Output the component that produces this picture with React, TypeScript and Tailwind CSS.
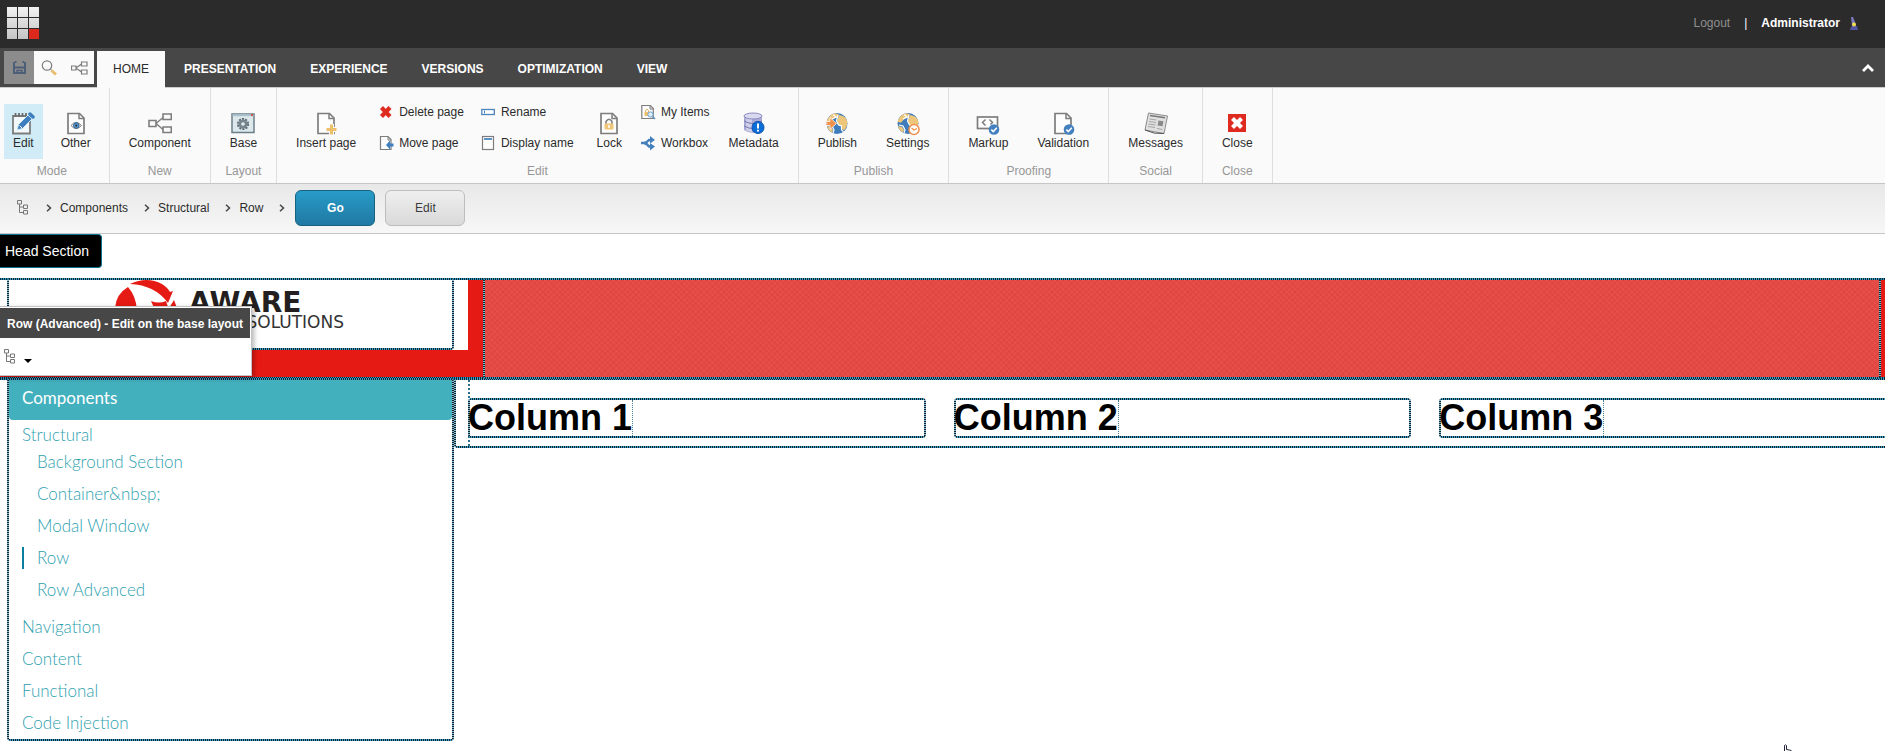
import type { ReactNode } from "react";

const LINE_TOP =
  "[background:repeating-linear-gradient(90deg,#082a3a_0_1px,#3194bd_1px_2px)]";
const LINE_BOX =
  "p-[2px] rounded-[4px] [background:repeating-linear-gradient(90deg,#14222a_0_1px,#3aa0cc_1px_2px)_top/100%_2px_no-repeat,repeating-linear-gradient(90deg,#14222a_0_1px,#3aa0cc_1px_2px)_bottom/100%_2px_no-repeat,repeating-linear-gradient(0deg,#14222a_0_1px,#7fb9d2_1px_2px)_left/2px_100%_no-repeat,repeating-linear-gradient(0deg,#14222a_0_1px,#7fb9d2_1px_2px)_right/2px_100%_no-repeat]";

const G = "#7d7d7d";

function Svg({ size = 24, children }: { size?: number; children: ReactNode }) {
  return (
    <svg
      width={size}
      height={size}
      viewBox={`0 0 ${size} ${size}`}
      fill="none"
      aria-hidden="true"
      className={"block shrink-0 " + (size === 24 ? "-mx-1" : "")}
    >
      {children}
    </svg>
  );
}

function Page() {
  return (
    <>
      <path d="M4 1.5h11.5l4.5 4.5v15.5H4z" fill="#fdfdfd" stroke={G} strokeWidth="1.7" />
      <path d="M15 2v4.5h5" stroke={G} strokeWidth="1.5" />
    </>
  );
}

function Tick() {
  return (
    <>
      <circle cx="18" cy="17.5" r="5.3" fill="#4380bf" />
      <path d="M15.3 17.6l2 2 3.5-3.8" stroke="#fff" strokeWidth="1.5" />
    </>
  );
}

function Globe() {
  return (
    <>
      <circle cx="12" cy="11.5" r="11" fill="#fbfbfb" />
      <circle cx="12" cy="11.5" r="10.5" fill="#3f7cbc" />
      <path d="M10 1.2l4 1-2 3-4 2-3 3.5-3.5-1Q4 2.5 10 1.2z" fill="#eec679" />
      <path d="M14 3q7 .5 8.4 7-.5 6-3.4 8.5l-2.5-2 .5-3-3.5-.5-1.5-4z" fill="#eec679" />
      <path d="M8 2.5l3 2.5-4 2M13 3l-1.5 6 2 4 3 .8 0 4 2 2M3 13l4 1 2 4-1 3" stroke="#fff" strokeWidth="1.2" />
      <path d="M2 14l4 1 2 3-1 2.5Q3 18 2 14z" fill="#eec679" />
    </>
  );
}

const icons: Record<string, ReactNode> = {
  edit: (
    <Svg>
      <path d="M2 4h17v17.5H2z" fill="#f2f8fb" stroke={G} strokeWidth="1.8" />
      <path d="M4.5 1v4M8 1v4M11.5 1v4M15 1v4" stroke="#6d6d6d" strokeWidth="1.8" />
      <path d="M6 18l1.5-5.5L17 3l4 4-9.5 9.5z" fill="#3f7fc0" stroke="#d1ecf7" />
      <path d="M19 2l3 3" stroke="#3f7fc0" strokeWidth="3.5" strokeLinecap="round" />
      <path d="M8.5 13.5l2.5 2.5" stroke="#fff" />
    </Svg>
  ),
  other: (
    <Svg>
      <Page />
      <path d="M7 13.5q5-6 10.500 0-5.500 6-10.500 0z" fill="#fff" stroke={G} />
      <circle cx="12.3" cy="13.5" r="2.8" fill="#5b9bd5" stroke="#32608f" />
      <circle cx="12.3" cy="13.5" r="1" fill="#222" />
    </Svg>
  ),
  component: (
    <Svg>
      <path d="M1 8.5h7v6H1zM15 2h8.300v5.500H15zM15 15h8.300v5.500H15z" stroke={G} strokeWidth="1.6" />
      <path d="M8 11.5l7-6M8 11.5l7 6" stroke={G} strokeWidth="1.4" />
    </Svg>
  ),
  base: (
    <Svg>
      <rect x="1" y="2" width="22" height="18.5" fill="#dde8ec" stroke="#6b7f88" strokeWidth="1.5" />
      <path d="M1.5 3.2h21" stroke="#a9c3cf" strokeWidth="2" />
      <path d="M20 3h2" stroke="#e02f22" strokeWidth="1.5" />
      <circle cx="12" cy="12" r="5" stroke="#5d6c74" strokeWidth="2.2" strokeDasharray="2 1.14" />
      <circle cx="12" cy="12" r="4.5" fill="#77868e" />
      <circle cx="12" cy="12" r="1.8" fill="#e6eef1" />
    </Svg>
  ),
  insert: (
    <Svg>
      <Page />
      <path d="M17.5 12v11M12 17.5h11" stroke="#fafafa" strokeWidth="5" />
      <path d="M17.5 12.5v10M12.5 17.5h10" stroke="#edc06c" strokeWidth="3" />
    </Svg>
  ),
  lock: (
    <Svg>
      <Page />
      <path d="M9 12v-2.500q3-4.500 6 0V12" stroke={G} strokeWidth="1.5" />
      <rect x="7.5" y="11.5" width="9" height="6" rx="1" fill="#efc577" />
      <path d="M12 13v3" stroke="#fff" strokeWidth="1.5" />
    </Svg>
  ),
  metadata: (
    <Svg>
      <path d="M2 4v14q9 6 18 0V4z" fill="#a9a9d6" />
      <path d="M4 5v13q3 2 6 2V6z" fill="#cfcfea" />
      <ellipse cx="11" cy="4" rx="9" ry="3" fill="#d8d8ee" stroke="#8a8abf" />
      <path d="M2 9q9 5 18 0M2 14q9 5 18 0" stroke="#7575ad" />
      <circle cx="16" cy="15.5" r="6" fill="#0c6fd8" stroke="#0a4fae" />
      <path d="M16 11.5v5M16 17.8v1.800" stroke="#fff" strokeWidth="2" />
    </Svg>
  ),
  publish: (
    <Svg>
      <Globe />
      <path d="M0 9.5h5V5.500l6.500 6-6.500 6v-4H0l2-2z" fill="#f0904a" stroke="#fafafa" strokeWidth=".8" />
    </Svg>
  ),
  settings: (
    <Svg>
      <Globe />
      <circle cx="18" cy="17.5" r="5" fill="#fff" stroke="#f0904a" strokeWidth="1.5" />
      <path d="M15.5 16l2.500 2 3-1.500" stroke="#f0904a" strokeWidth="1.2" />
    </Svg>
  ),
  markup: (
    <Svg>
      <rect x="1.5" y="5" width="20" height="11.5" fill="#fdfdfd" stroke={G} strokeWidth="1.7" />
      <path d="M9.5 7.5L6.500 10.500l3 3M13.500 7.500l3 3-2 2" stroke={G} strokeWidth="1.5" />
      <Tick />
    </Svg>
  ),
  validation: (
    <Svg>
      <Page />
      <Tick />
    </Svg>
  ),
  messages: (
    <Svg>
      <path d="M4.5 1l19 3-3.500 17.500-19-3.500z" fill="#e0e0e0" stroke="#8b8b8b" />
      <path d="M6 3.5l15 2.300" stroke="#777" strokeWidth="1.6" />
      <path d="M5.5 7l7 1M5 9.500l7 1M4.500 12l7 1M4 14.500l7 1M13 16.500l5.500 1" stroke="#a5a5a5" />
      <path d="M14.5 8.500l5 .8-1 5-5-.8z" fill="#8a8a8a" />
      <path d="M1 18q9 4.500 19 3.500" stroke="#555" />
    </Svg>
  ),
  close: (
    <Svg>
      <rect x="3" y="2" width="18" height="18" fill="#df2a20" />
      <path d="M7.5 6.500l9 9M16.500 6.500l-9 9" stroke="#fff" strokeWidth="4.2" />
    </Svg>
  ),
  delete: (
    <Svg size={16}>
      <path d="M2.5 3.500l8.500 9M11 3.500l-8.500 9" stroke="#df2a20" strokeWidth="4.2" />
    </Svg>
  ),
  move: (
    <Svg size={16}>
      <path d="M1.5 1.500h7.500l3 3v10H1.500z" fill="#fdfdfd" stroke={G} strokeWidth="1.2" />
      <path d="M9 1.500v3.500h3" stroke={G} />
      <path d="M7 10l4-4.500v3h3.500v3H11v3z" fill="#3f7fc0" />
    </Svg>
  ),
  rename: (
    <Svg size={16}>
      <rect x=".8" y="5.5" width="12.5" height="5" fill="#fff" stroke="#4c86bd" strokeWidth="1.3" />
      <path d="M3.5 6.500v3" stroke="#4c86bd" />
    </Svg>
  ),
  display: (
    <Svg size={16}>
      <rect x="1.5" y="1.5" width="11" height="13" fill="#fdfdfd" stroke={G} strokeWidth="1.2" />
      <path d="M3 4h8" stroke="#4c86bd" strokeWidth="1.8" />
    </Svg>
  ),
  items: (
    <Svg size={16}>
      <path d="M.8 1.500h8.500l3 3v10H.8z" fill="#fdfdfd" stroke={G} strokeWidth="1.2" />
      <path d="M9 1.500v3.500h3" stroke={G} />
      <path d="M4.5 8V6.500q1.500-2.500 3 0V8" stroke="#e3ab55" />
      <rect x="3.5" y="8" width="4" height="4" fill="#edc06c" />
      <circle cx="9.5" cy="10.5" r="2.6" fill="#dcedf8" stroke="#6ea5d0" />
      <path d="M11.5 12.500l2.500 2.500" stroke="#5c92c4" strokeWidth="1.5" />
    </Svg>
  ),
  workbox: (
    <Svg size={16}>
      <path d="M0 8h4M3 8q3-.5 5-3h2M3 8q3 .5 5 3.500h2" stroke="#4480bd" strokeWidth="2.4" />
      <path d="M9 1l5 4-5 3.500zM9 8l5 3.500-5 4z" fill="#4480bd" />
    </Svg>
  ),
};

function Big({ icon, label, look = "px-[10px]" }: { icon: string; label: string; look?: string }) {
  return (
    <button
      type="button"
      className={"flex h-[55px] flex-col items-center pt-2 leading-[14px] whitespace-nowrap " + look}
    >
      {icons[icon]}
      {label}
    </button>
  );
}

function Small({ items, tight }: { items: [string, string][]; tight?: boolean }) {
  return (
    <div className={"flex flex-col items-start gap-[15px] " + (tight ? "-mx-1" : "")}>
      {items.map(([icon, label]) => (
        <button key={label} type="button" className="flex h-4 items-center gap-1 px-1 leading-4 whitespace-nowrap">
          {icons[icon]}
          {label}
        </button>
      ))}
    </div>
  );
}

function Group({ label, first, children }: { label: string; first?: boolean; children: ReactNode }) {
  return (
    <section
      aria-label={label}
      className={"flex flex-col border-r border-[#dedede] pt-4 pr-[9px] pb-1 " + (first ? "pl-1" : "pl-[9px]")}
    >
      <div className="flex gap-[9px]">{children}</div>
      <div className="mt-1 text-center leading-4 text-[#979797]">{label}</div>
    </section>
  );
}

function Tree() {
  return (
    <svg width="12" height="15" viewBox="0 0 12 15" fill="none" stroke="#777" aria-hidden="true" className="block shrink-0">
      <path d="M.5 .5h4v3.500h-4zM6.500 5h4v3.500h-4zM6.500 10.500h4V14h-4zM2.500 4v8.500h4M2.500 7h4" />
    </svg>
  );
}

function Chevron() {
  return (
    <svg width="6" height="8" viewBox="0 0 6 8" fill="none" stroke="#444" strokeWidth="1.5" aria-hidden="true" className="shrink-0">
      <path d="M1 .8L4.500 4 1 7.200" />
    </svg>
  );
}

const tabs = ["PRESENTATION", "EXPERIENCE", "VERSIONS", "OPTIMIZATION", "VIEW"];
const crumbs = ["Components", "Structural", "Row"];
const structural = ["Background Section", "Container&nbsp;", "Modal Window", "Row", "Row Advanced"];
const sections = ["Navigation", "Content", "Functional", "Code Injection"];
const columns = ["Column 1", "Column 2", "Column 3"];

export default function App() {
  return (
    <div className="relative min-h-screen overflow-hidden bg-white font-['Liberation_Sans',Arial,sans-serif] text-xs text-[#2b2b2b]">
      <header className="flex h-12 items-center justify-between bg-[#2b2b2b] pr-[27px] pl-[7px]">
        <svg width="32" height="32" viewBox="0 0 32 32" aria-label="Home" className="-mt-0.5">
          <defs>
            <linearGradient id="tile" x1="0" y1="0" x2="0" y2="32" gradientUnits="userSpaceOnUse">
              <stop offset="0" stopColor="#f2f2f2" />
              <stop offset="1" stopColor="#c4c4c4" />
            </linearGradient>
          </defs>
          {[0, 11, 22].map((y) =>
            [0, 11, 22].map((x) => (
              <rect key={`${x}-${y}`} x={x} y={y} width="10" height="10" fill={x + y === 44 ? "#dc291e" : "url(#tile)"} />
            )),
          )}
        </svg>
        <div className="flex items-center pb-0.5 text-white">
          <a href="#logout" className="text-[#8f8f8f]">Logout</a>
          <span className="px-[14px]">|</span>
          <span className="font-bold">Administrator</span>
          <svg width="8" height="14" viewBox="0 0 8 14" aria-hidden="true" className="mt-0.5 ml-[10px]">
            <path d="M1 0h2l2 5 1 4H2z" fill="#7a7ac0" />
            <path d="M0 13q1-5 4-5 3.500 0 4 5z" fill="#5353a4" />
            <circle cx="4" cy="7.5" r="2" fill="#f1dd4b" />
          </svg>
        </div>
      </header>

      <nav className="flex h-10 items-stretch border-b border-[#ccc] bg-[#474747] font-bold text-white">
        <div className="mt-[3px] ml-1 flex h-[33px] bg-[#fafafa]">
          <button type="button" aria-label="Save" className="flex w-[30px] items-center justify-center bg-[#8c8c8c]">
            <svg width="13" height="13" viewBox="0 0 13 13" fill="none" aria-hidden="true">
              <path d="M1 1v11h11V1" stroke="#4c5f77" strokeWidth="2" />
              <path d="M2 6.500h9" stroke="#4c5f77" strokeWidth="2" />
              <path d="M4 12V9.500h5V12" stroke="#4c5f77" strokeWidth="1.4" />
              <path d="M2 1h1.500M9.500 1H11" stroke="#4c5f77" strokeWidth="2" />
            </svg>
          </button>
          <button type="button" aria-label="Search" className="flex w-[30px] items-center justify-center">
            <svg width="16" height="16" viewBox="0 0 16 16" fill="none" aria-hidden="true">
              <circle cx="6" cy="5.5" r="4.7" stroke={G} strokeWidth="1.2" />
              <path d="M9.5 9l1.500 1.500" stroke={G} />
              <path d="M10.5 10.500l4.500 4" stroke="#e8bd6b" strokeWidth="3" />
            </svg>
          </button>
          <button type="button" aria-label="Navigate" className="flex w-[30px] items-center justify-center">
            <svg width="17" height="14" viewBox="0 0 17 14" fill="none" stroke={G} aria-hidden="true">
              <path d="M.5 5h4.500v4H.5zM10.500 1h5.500v4h-5.500zM10.500 9h5.500v4h-5.500zM5 7l5.500-4M5 7l5.500 4" strokeWidth="1.2" />
            </svg>
          </button>
        </div>
        <button type="button" className="mt-[3px] mr-0.5 -mb-px ml-[3px] bg-[#fafafa] px-4 pb-0.5 font-normal text-[#2b2b2b]">
          HOME
        </button>
        {tabs.map((t) => (
          <button key={t} type="button" className="mt-[3px] px-[17px]">
            {t}
          </button>
        ))}
        <button type="button" aria-label="Collapse" className="mr-[11px] ml-auto">
          <svg width="12" height="8" viewBox="0 0 12 8" fill="none" stroke="#fff" strokeWidth="2.8" aria-hidden="true">
            <path d="M1 7l5-5 5 5" />
          </svg>
        </button>
      </nav>

      <div className="flex border-b border-[#c6c6c6] bg-[#fafafa]">
        <Group label="Mode" first>
          <Big icon="edit" label="Edit" look="bg-[#d1ecf7] px-[9px]" />
          <Big icon="other" label="Other" look="px-[9px]" />
        </Group>
        <Group label="New">
          <Big icon="component" label="Component" />
        </Group>
        <Group label="Layout">
          <Big icon="base" label="Base" />
        </Group>
        <Group label="Edit">
          <Big icon="insert" label="Insert page" />
          <Small items={[["delete", "Delete page"], ["move", "Move page"]]} />
          <Small items={[["rename", "Rename"], ["display", "Display name"]]} />
          <Big icon="lock" label="Lock" />
          <Small tight items={[["items", "My Items"], ["workbox", "Workbox"]]} />
          <Big icon="metadata" label="Metadata" />
        </Group>
        <Group label="Publish">
          <Big icon="publish" label="Publish" />
          <Big icon="settings" label="Settings" />
        </Group>
        <Group label="Proofing">
          <Big icon="markup" label="Markup" />
          <Big icon="validation" label="Validation" />
        </Group>
        <Group label="Social">
          <Big icon="messages" label="Messages" />
        </Group>
        <Group label="Close">
          <Big icon="close" label="Close" />
        </Group>
      </div>

      <div className="flex h-[50px] items-center border-b border-[#c6c6c6] bg-linear-to-b from-[#e8e8e8] to-[#f7f7f7] pb-0.5 pl-[17px]">
        <Tree />
        <div className="ml-[17px] flex items-center">
          {crumbs.map((c) => (
            <span key={c} className="mr-4 flex items-center gap-2">
              <Chevron />
              <a href={"#" + c}>{c}</a>
            </span>
          ))}
          <Chevron />
        </div>
        <button
          type="button"
          className="ml-[10px] h-9 w-20 rounded-md border border-[#17627f] bg-linear-to-b from-[#289bc8] to-[#2079a3] font-bold text-white"
        >
          Go
        </button>
        <button
          type="button"
          className="ml-[10px] h-9 w-20 rounded-md border border-[#bdbdbd] bg-linear-to-b from-[#efefef] to-[#d9d9d9] text-[#3c3c3c]"
        >
          Edit
        </button>
      </div>

      <div className="mb-[10px] flex">
        <div className="h-[34px] rounded-r border border-l-0 border-[#08728f] bg-black pr-3 pl-[5px] text-sm leading-8 text-white">
          Head Section
        </div>
      </div>

      <div className={"h-0.5 " + LINE_TOP} />
      <div className="relative flex bg-[#e61a14]">
        <div className="mb-[27px] h-[70px] w-[468px] shrink-0 bg-white pl-[7px]">
          <div className={"-mt-0.5 h-[72px] w-[447px] " + LINE_BOX}>
            <svg width="440" height="68" viewBox="0 0 440 68" role="img" aria-label="Aware Solutions">
              <path d="M106 28Q107 14 119 7Q127 16 128 30L106 30Z" fill="#e61a14" />
              <path d="M121 4Q138-4 153 4Q159 8 161 12L164 11L159 23Q146 5 121 4Z" fill="#e61a14" />
              <path d="M142 21Q150 24 157 21L160 30H146zM165 20l3 8h-8z" fill="#e61a14" />
              <text x="180" y="32" fill="#231f20" fontFamily="'DejaVu Sans', sans-serif" fontWeight="bold" fontSize="28">
                AWARE
              </text>
              <text x="335" y="48" textAnchor="end" fill="#333" fontFamily="'DejaVu Sans', sans-serif" fontSize="17">
                SOLUTIONS
              </text>
            </svg>
          </div>
        </div>
        <div className="-mt-0.5 mr-[4px] -mb-0.5 ml-[15px] flex flex-1">
          <div className={"flex flex-1 " + LINE_BOX}>
            <div className="flex-1 bg-[#ea4e49] bg-[repeating-linear-gradient(45deg,#c83c3638_0_2px,transparent_2px_4px),repeating-linear-gradient(-45deg,#c83c3638_0_2px,transparent_2px_4px)]" />
          </div>
        </div>
        <div className="absolute top-[26px] left-0 z-10 w-[252px] border border-l-0 border-[#c4c4c4] bg-white pt-px pr-px shadow-[2px_2px_5px_rgba(0,0,0,0.3)]">
          <div className="h-[30px] bg-[#474747] pl-[7px] leading-8 font-bold whitespace-nowrap text-white">
            Row (Advanced) - Edit on the base layout
          </div>
          <button type="button" aria-label="Layout options" className="flex h-[37px] items-center gap-2 pl-1">
            <Tree />
            <svg width="8" height="4" viewBox="0 0 8 4" aria-hidden="true" className="mt-2">
              <path d="M0 0h8L4 4z" fill="#000" />
            </svg>
          </button>
        </div>
      </div>
      <div className={"h-[3px] " + LINE_TOP} />

      <div className="-mt-0.5 flex items-start pl-[7px]">
        <aside className={"w-[447px] shrink-0 font-['Lato','Open_Sans',sans-serif] text-[17px] leading-8 font-light text-[#2f9fb0] " + LINE_BOX}>
          <h2 className="h-10 rounded-b-sm bg-[#43b0be] pl-[13px] leading-9 font-normal text-white">Components</h2>
          <ul className="pl-[13px]">
            <li>
              <a href="#structural" className="block h-[26px] leading-[30px]">Structural</a>
              <ul className="mb-[5px]">
                {structural.map((s) => (
                  <li key={s} className="flex items-center">
                    <span className={"h-[22px] w-0.5 " + (s === "Row" ? "bg-[#0c7ea0]" : "")} />
                    <a href={"#" + s} className="pl-[13px]">{s}</a>
                  </li>
                ))}
              </ul>
            </li>
            {sections.map((s) => (
              <li key={s}>
                <a href={"#" + s}>{s}</a>
              </li>
            ))}
          </ul>
        </aside>
        <main className={"-mr-[14px] h-[70px] flex-1 " + LINE_BOX}>
          <div className="ml-3 h-full border-l-2 border-dotted border-[#2c6f8d] pt-[18px]">
            <div className="-ml-0.5 grid grid-cols-3 gap-7">
              {columns.map((c) => (
                <div key={c} className={"flex h-10 " + LINE_BOX}>
                  <h2 className="-ml-0.5 border-r border-dotted border-[#4b7d93] text-[36px] leading-9 font-bold text-black">{c}</h2>
                </div>
              ))}
            </div>
          </div>
        </main>
      </div>

      <svg width="16" height="7" viewBox="0 0 16 7" fill="#fff" stroke="#222238" aria-hidden="true" className="absolute right-[88px] bottom-0">
        <path d="M3.5 8V1.500q1-1.500 2 0V5.500l3 .5q2 0 2.500 2" />
      </svg>
    </div>
  );
}
